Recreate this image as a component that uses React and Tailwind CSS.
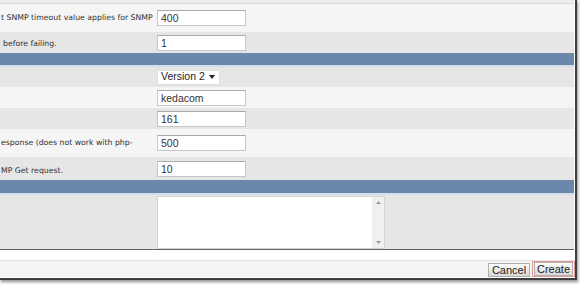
const label = 'font-["DejaVu_Sans",sans-serif] text-[7.75px] text-[#333] whitespace-nowrap'
const field = 'h-[16px] w-[89px] border border-[#c8c8c8] border-t-[#a9a9a9] bg-white px-[3px] font-["Liberation_Sans",Arial,sans-serif] text-[10.5px] leading-[14px] text-[#333]'
const btn = 'border border-[#b0b0b0] bg-gradient-to-b from-[#fdfdfd] to-[#d8d8d8] font-["Liberation_Sans",Arial,sans-serif] text-[11px] leading-[12px] text-[#222]'

function Row({ tone, h, text, align = 'center', pad = '', children }) {
  return (
    <div
      className={`flex w-[574px] ${h} ${tone === 'dark' ? 'bg-[#e6e6e6]' : 'bg-[#f5f5f5]'}`}
    >
      <div className={`flex w-[157px] pl-[1px] ${align === 'end' ? 'items-end pb-[3px]' : 'items-center'} ${pad}`}>
        <span className={label}>{text}</span>
      </div>
      <div className="flex items-center">{children}</div>
    </div>
  )
}

function Bar({ h }) {
  return (
    <div className="w-[574px]">
      <div className={`${h} bg-[#6b88ab]`} />
      <div className="h-[2px] bg-[#d6ddef]" />
    </div>
  )
}

export default function App() {
  return (
    <div className="h-[284px] w-[580px] overflow-hidden bg-[#f0f0f0]">
      <div className="h-[280px] w-[577px] border-r-[2px] border-b-[2px] border-[#3f3f3f] bg-white shadow-[1px_2px_2px_rgba(0,0,0,0.35)]">
        <div className="h-[4px] w-[574px] border-b border-[#dadada] bg-[#ececec]" />

        <Row tone="light" h="h-[28px]" text="t SNMP timeout value applies for SNMP">
          <input className={field} defaultValue="400" />
        </Row>
        <Row tone="dark" h="h-[21px]" text="before failing." align="end" pad="pl-[3px]">
          <input className={field} defaultValue="1" />
        </Row>

        <Bar h="h-[12px]" />

        <Row tone="dark" h="h-[20px]" text="">
          <div className="flex h-[15px] w-[63px] items-center justify-between border border-[#e0e0e0] bg-white pl-[3px] pr-[4px] font-['Liberation_Sans',Arial,sans-serif] text-[10.5px] text-[#222]">
            <span>Version 2</span>
            <svg width="6" height="4" viewBox="0 0 6 4">
              <path d="M0 0h6L3 4z" fill="#222" />
            </svg>
          </div>
        </Row>
        <Row tone="light" h="h-[21px]" text="">
          <input className={field} defaultValue="kedacom" />
        </Row>
        <Row tone="dark" h="h-[21px]" text="">
          <input className={field} defaultValue="161" />
        </Row>
        <Row tone="light" h="h-[28px]" text="esponse (does not work with php-">
          <input className={field} defaultValue="500" />
        </Row>
        <Row tone="dark" h="h-[23px]" text="MP Get request." align="end">
          <input className={field} defaultValue="10" />
        </Row>

        <Bar h="h-[13px]" />

        <div className="flex h-[55px] w-[574px] border-b border-[#5c6673] bg-[#e6e6e6]">
          <div className="w-[157px]" />
          <div className="mt-[1px] flex h-[53px] w-[228px] border border-[#d4d4d4] bg-white">
            <div className="flex-1" />
            <div className="flex w-[12px] flex-col items-center justify-between bg-[#f0f0f0] py-[4px]">
              <svg width="5" height="3" viewBox="0 0 5 3">
                <path d="M0 3h5L2.5 0z" fill="#9a9a9a" />
              </svg>
              <svg width="5" height="3" viewBox="0 0 5 3">
                <path d="M0 0h5L2.5 3z" fill="#9a9a9a" />
              </svg>
            </div>
          </div>
        </div>

        <div className="h-[11px] w-[574px] border-b border-[#e2e2e2] bg-white" />

        <div className="flex h-[16px] w-[575px] items-end justify-end bg-[#f5f5f5]">
          <button type="button" className={`mr-[2px] h-[14px] w-[42px] ${btn}`}>
            Cancel
          </button>
          <div className="flex h-[16px] w-[43px] items-end border border-[#e59a9a] px-[1px]">
            <button type="button" className={`h-[14px] w-full ${btn}`}>
              Create
            </button>
          </div>
        </div>
      </div>
    </div>
  )
}
